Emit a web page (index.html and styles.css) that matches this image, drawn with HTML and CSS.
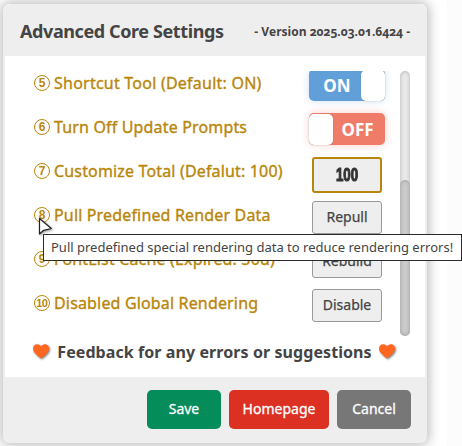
FILE: index.html
```html
<!DOCTYPE html>
<html lang="en">
<head>
<meta charset="utf-8">
<title>Advanced Core Settings</title>
<link rel="stylesheet" href="styles.css">
</head>
<body>
<main class="dialog">
  <header class="header">
    <h1 class="title">Advanced Core Settings</h1>
    <span class="version">- Version 2025.03.01.6424 -</span>
  </header>
  <section class="body">
    <div class="scroller">
      <ul class="list">
        <li class="row"><span class="num">5</span><span class="label l5">Shortcut Tool (Default: ON)</span><span class="toggle on"><b>ON</b><i class="knob"></i></span></li>
        <li class="row"><span class="num">6</span><span class="label l6">Turn Off Update Prompts</span><span class="toggle off"><i class="knob"></i><b>OFF</b></span></li>
        <li class="row"><span class="num">7</span><span class="label l7">Customize Total (Defalut: 100)</span><span class="field"><b>100</b></span></li>
        <li class="row"><span class="num">8</span><span class="label l8">Pull Predefined Render Data</span><button class="action">Repull</button></li>
        <li class="row"><span class="num">9</span><span class="label l9">FontList Cache (Expired: 30d)</span><button class="action">Rebuild</button></li>
        <li class="row"><span class="num ten">10</span><span class="label l10">Disabled Global Rendering</span><button class="action">Disable</button></li>
      </ul>
      <div class="track"><div class="thumb"></div></div>
    </div>
    <p class="feedback">
      <svg class="heart" viewBox="0 0 16 15"><path d="M8 14.5C5.5 12.300 0 9 0 4.500C0 1.900 1.900.3 4.100.3C5.800.3 7.200 1.200 8 2.600C8.800 1.200 10.200.3 11.900.3C14.100.3 16 1.900 16 4.500C16 9 10.500 12.300 8 14.500Z"/></svg>
      <span class="feedback-text">Feedback for any errors or suggestions</span>
      <svg class="heart" viewBox="0 0 16 15"><path d="M8 14.5C5.5 12.300 0 9 0 4.500C0 1.900 1.900.3 4.100.3C5.800.3 7.200 1.200 8 2.600C8.800 1.200 10.200.3 11.900.3C14.100.3 16 1.900 16 4.500C16 9 10.500 12.300 8 14.500Z"/></svg>
    </p>
  </section>
  <footer class="footer">
    <button class="btn save">Save</button>
    <button class="btn home">Homepage</button>
    <button class="btn cancel">Cancel</button>
  </footer>
</main>
<div class="tooltip">Pull predefined special rendering data to reduce rendering errors!</div>
<svg class="cursor" viewBox="0 0 16 22"><path d="M1.500 1.500V17L5.600 13.300L13.300 11.500Z"/></svg>
</body>
</html>
```
FILE: styles.css
```css
* { box-sizing: border-box; }
body {
  margin: 0;
  width: 462px;
  height: 446px;
  overflow: hidden;
  padding: 4px 0 0 3px;
  background: linear-gradient(90deg, #fff 447px, #fcfcfc 447px);
  font-family: "Noto Sans", "Open Sans", sans-serif;
  color: #444;
}
.dialog {
  width: 424px;
  height: 439px;
  border: 2px solid #eee;
  border-top: 0;
  border-radius: 6px;
  background: #fff;
  box-shadow: 0 0 12px 2px rgba(0, 0, 0, .27);
  display: flex;
  flex-direction: column;
}
.header {
  height: 52px;
  flex: none;
  padding: 2px 15px 0 15px;
  background: #eee;
  border-radius: 6px 6px 0 0;
  display: flex;
  align-items: center;
  justify-content: space-between;
}
.title { margin: 0; font-size: 18px; font-weight: 700; letter-spacing: -.4px; white-space: nowrap; }
.version { font: 700 12px "Open Sans", sans-serif; font-variant-numeric: oldstyle-nums; white-space: nowrap; letter-spacing: 0; padding-top: 1px; }
.body { height: 321px; flex: none; padding: 15px 15px 0 29px; }
.scroller { height: 265px; overflow: hidden; display: flex; margin-left: -10px; padding-left: 10px; }
.list { list-style: none; margin: -9px 0 0; padding: 0; width: 366px; flex: none; }
.row { height: 44px; display: flex; align-items: center; width: 351px; }
.num {
  width: 16px; height: 16px; border: 1px solid #b8860b; border-radius: 50%;
  color: #b8860b; font: 700 12px/14px "Liberation Sans", sans-serif; text-align: center; margin-top: -2px;
}
.ten { letter-spacing: -.7px; font-size: 11px; text-indent: -.5px; }
.label { color: #b8860b; font-size: 16px; line-height: 24px; margin: -2px auto 0 4px; white-space: nowrap; -webkit-text-stroke: .35px #b8860b; letter-spacing: .16px; }
.l5 { letter-spacing: .23px; }
.toggle {
  width: 76px; height: 32px; border-radius: 5px; color: #fff; font-size: 17px;
  display: flex; align-items: center; margin: 2px 0 0 0;
}
.toggle b { flex: 1; text-align: center; padding-top: 1px; }
.on b { padding-left: 4px; }
.off b { padding-right: 3px; }
.on { background: #619fd8; box-shadow: 0 0 8px #cfe1f6; }
.off { background: #ef7b69; box-shadow: 0 0 8px #facfca; }
.knob { width: 24px; height: 31px; border-radius: 5px; background: #fff; box-shadow: 0 0 1px #777; }
.field, .action { width: 70px; margin-right: 3px; background: #eee; border-radius: 3px; }
.field { height: 36px; border: 2px solid #b8860b; margin-top: 6px; display: flex; align-items: center; justify-content: center; }
.field b { font: 700 18px "Liberation Sans", sans-serif; color: #333; transform: scaleX(.74); -webkit-text-stroke: 1.100px #333; }
.action { height: 33px; border: 1px solid #999; padding: 0 0 1px; margin-top: 2px; font: 14px "Noto Sans", sans-serif; color: #444; -webkit-text-stroke: .25px #444; }
.track { width: 10px; height: 265px; border-radius: 5px; background: #eaeaea; box-shadow: inset 0 0 4px rgba(0,0,0,.25); padding-top: 109px; flex: none; }
.thumb { height: 156px; border-radius: 5px; background: #ccc; box-shadow: inset 0 0 4px rgba(0,0,0,.25); }
.feedback { margin: 4px 0 0; height: 24px; display: flex; align-items: center; width: 361px; justify-content: space-between; }
.feedback-text { font-weight: 700; font-size: 16px; white-space: nowrap; letter-spacing: .08px; }
.heart { width: 16px; height: 15px; flex: none; fill: #ff6620; overflow: visible; margin: 0 0 2px -1px; filter: drop-shadow(1px 1px 1px #777); }
.footer { height: 64px; flex: none; background: #eee; display: flex; gap: 8px; justify-content: flex-end; padding: 13px 14px 0; border-radius: 0 0 4px 4px; }
.btn { width: 74px; height: 39px; border: 0; border-radius: 5px; padding: 0 0 2px; color: #fff; font: 14px "Noto Sans", sans-serif; -webkit-text-stroke: .3px #fff; }
.save { background: #048c5a; }
.home { width: 100px; background: #db3022; }
.cancel { background: #777; }
.tooltip {
  position: absolute; left: 43px; top: 234px; width: 419px; height: 27px;
  background: #fff; border: 1px solid #2b2b2b; padding-left: 7px;
  font-size: 13px; line-height: 25px; color: #444; white-space: nowrap;
}
.cursor { position: absolute; left: 38px; top: 217px; width: 16px; height: 22px; fill: #fff; stroke: #222; stroke-width: 1.200; stroke-linejoin: round; filter: drop-shadow(1px 1px 1px #999); }
```
